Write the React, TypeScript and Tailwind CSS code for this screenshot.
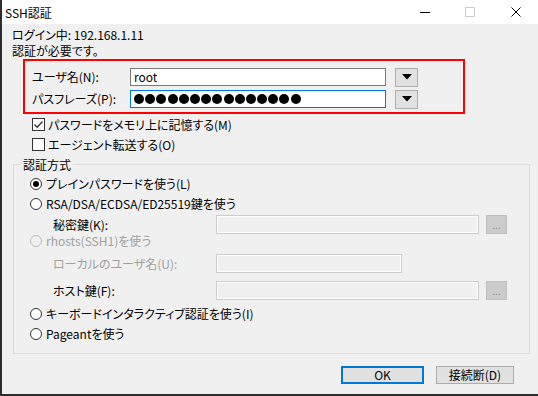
import React from "react";

function Radio({ checked = false, disabled = false }: { checked?: boolean; disabled?: boolean }) {
  return (
    <span
      className={`flex h-[12px] w-[12px] shrink-0 items-center justify-center rounded-full border ${
        disabled ? "border-[#bcbcbc] bg-[#f0f0f0]" : "border-[#333333] bg-white"
      }`}
    >
      {checked && <span className="h-[6px] w-[6px] rounded-full bg-[#000000]" />}
    </span>
  );
}

function Check({ checked = false }: { checked?: boolean }) {
  return (
    <span className="flex h-[13px] w-[13px] shrink-0 items-center justify-center border border-[#333333] bg-white">
      {checked && (
        <svg width="11" height="11" viewBox="0 0 11 11">
          <path d="M1.5 5.5 L4.2 8.2 L9.5 2.5" fill="none" stroke="#333333" strokeWidth="1.3" />
        </svg>
      )}
    </span>
  );
}

function DropBtn() {
  return (
    <div className="ml-[9px] flex h-[19px] w-[23px] items-center justify-center border border-[#adadad] bg-[#e1e1e1]">
      <svg width="10" height="6" viewBox="0 0 10 6">
        <path d="M0 0 H10 L5 5.5 Z" fill="#000000" />
      </svg>
    </div>
  );
}

function DisabledInput({ w }: { w: string }) {
  return <div className={`h-[19px] ${w} border border-[#cccccc] bg-[#f0f0f0] shadow-[inset_0_0_0_1px_#ffffff]`} />;
}

function DotsBtn() {
  return (
    <div className="ml-[7px] flex h-[19px] w-[21px] items-center justify-center border border-[#bfbfbf] bg-[#cccccc] text-[10px] leading-none text-[#838383]">
      ...
    </div>
  );
}

export default function App() {
  return (
    <div className="relative flex h-[396px] w-[538px] flex-col overflow-hidden font-['Noto_Sans_CJK_JP','Liberation_Sans',sans-serif] text-[12px] text-black [font-feature-settings:'palt']">
      {/* Title bar */}
      <div className="flex h-[24px] shrink-0 items-center border-l-2 border-[#2e2e2e] bg-white">
        <span className="ml-[3px] leading-[15px]">SSH認証</span>
        <div className="ml-auto flex items-center">
          <div className="mr-[35px] h-[1px] w-[10px] bg-black" />
          <div className="mr-[36px] h-[10px] w-[10px] border border-[#cccccc]" />
          <svg width="10" height="10" viewBox="0 0 10 10" className="mr-[17px]">
            <path d="M0.5 0.5 L9.5 9.5 M9.5 0.5 L0.5 9.5" stroke="#000" strokeWidth="1" />
          </svg>
        </div>
      </div>

      {/* Body */}
      <div className="flex flex-1 flex-col border-b-2 border-l-2 border-[#2e2e2e] bg-[#f0f0f0]">
        <div className="pl-[10px] pt-[3px]">
          <div className="h-[16px] leading-[16px]">ログイン中: 192.168.1.11</div>
          <div className="h-[16px] leading-[16px]">認証が必要です。</div>
        </div>

        <div className="pl-[30px]">
          <div className="mt-[9px] flex h-[18px] items-center">
            <span className="w-[98px]">ユーザ名(N):</span>
            <div className="flex h-[18px] w-[256px] items-center border border-[#7a7a7a] bg-white pl-[3px]">root</div>
            <DropBtn />
          </div>
          <div className="mt-[4px] flex h-[18px] items-center">
            <span className="w-[98px]">パスフレーズ(P):</span>
            <div
              className="flex h-[18px] w-[256px] items-center gap-[1.2px] border border-[#0078d7] bg-white pl-[3px]"
              aria-label="password"
            >
              {Array.from({ length: 15 }).map((_, i) => (
                <span key={i} className="h-[10px] w-[10px] rounded-full bg-black" />
              ))}
            </div>
            <DropBtn />
          </div>

          <div className="mt-[10px] flex h-[13px] items-center gap-[3px]">
            <Check checked />
            <span className="leading-[15px]">パスワードをメモリ上に記憶する(M)</span>
          </div>
          <div className="mt-[7px] flex h-[13px] items-center gap-[3px]">
            <Check />
            <span className="leading-[15px]">エージェント転送する(O)</span>
          </div>
        </div>

        {/* Group */}
        <div className="ml-[11px] mt-[13px] w-[517px] border border-[#dcdcdc] pb-[12px] pl-[16px]">
          <div className="-ml-[9px] -mt-[8px] w-fit bg-[#f0f0f0] px-[2px] leading-[15px]">認証方式</div>

          <div className="mt-[2px] flex h-[20px] items-center gap-[4px]">
            <Radio checked />
            <span>プレインパスワードを使う(L)</span>
          </div>
          <div className="flex h-[20px] items-center gap-[4px]">
            <Radio />
            <span>RSA/DSA/ECDSA/ED25519鍵を使う</span>
          </div>
          <div className="mt-[1px] flex h-[19px] items-center pl-[23px]">
            <span className="w-[163px]">秘密鍵(K):</span>
            <DisabledInput w="w-[263px]" />
            <DotsBtn />
          </div>
          <div className="flex h-[14px] items-center gap-[4px] text-[#a0a0a0]">
            <Radio disabled />
            <span>rhosts(SSH1)を使う</span>
          </div>
          <div className="mt-[6px] flex h-[19px] items-center pl-[23px]">
            <span className="w-[163px] text-[#a0a0a0]">ローカルのユーザ名(U):</span>
            <DisabledInput w="w-[186px]" />
          </div>
          <div className="mt-[8px] flex h-[19px] items-center pl-[23px]">
            <span className="w-[163px]">ホスト鍵(F):</span>
            <DisabledInput w="w-[263px]" />
            <DotsBtn />
          </div>
          <div className="mt-[7px] flex h-[14px] items-center gap-[4px]">
            <Radio />
            <span>キーボードインタラクティブ認証を使う(I)</span>
          </div>
          <div className="mt-[6px] flex h-[14px] items-center gap-[4px]">
            <Radio />
            <span>Pageantを使う</span>
          </div>
        </div>

        {/* Buttons */}
        <div className="mt-[12px] flex justify-end gap-[12px] pr-[24px]">
          <div className="flex h-[18px] w-[83px] items-center justify-center border-2 border-[#0078d7] bg-[#e1e1e1]">OK</div>
          <div className="flex h-[18px] w-[78px] items-center justify-center border border-[#adadad] bg-[#e1e1e1]">接続断(D)</div>
        </div>
      </div>

      {/* Red annotation box */}
      <div className="pointer-events-none absolute left-[23px] top-[59px] h-[55px] w-[442px] border-2 border-[#ff0000]" />
    </div>
  );
}
